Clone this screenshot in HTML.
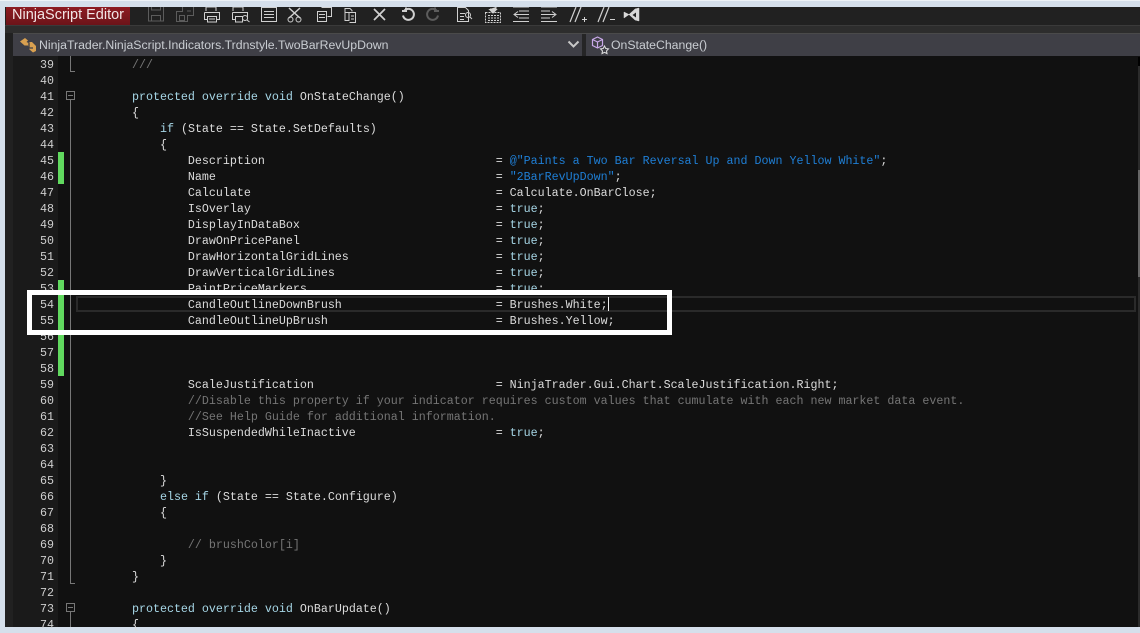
<!DOCTYPE html>
<html><head><meta charset="utf-8"><style>
html,body{margin:0;padding:0;width:1140px;height:627px;overflow:hidden;background:#d5dfeb}
div,svg,pre{position:absolute}
pre{margin:0;font:11.67px/16px "Liberation Mono",monospace;color:#dcdcdc;white-space:pre}
.k{color:#a6d6e6}.c{color:#757575}.s{color:#1f7fd6}
#n{left:14px;top:57px;width:40px;text-align:right;color:#cfcfcf}
</style></head><body>
<div style="left:0;top:0;width:1140px;height:1px;background:#eef2f7"></div>
<div style="left:5px;top:7px;width:1135px;height:620px;background:#212121"></div>
<div style="left:5px;top:25px;width:1135px;height:8px;background:#2d2d2d;border-top:1px solid #3a3a3a;box-sizing:border-box"></div>
<div style="left:13px;top:33px;width:1127px;height:1px;background:#4a4a4a"></div>
<div style="left:6px;top:7px;width:124px;height:18px;background:linear-gradient(#8e1b22,#6b1419)"></div>
<div style="left:12px;top:6px;font:14.5px/18px 'Liberation Sans',sans-serif;color:#f2e6e6;white-space:nowrap">NinjaScript Editor</div>

<svg style="left:140px;top:7px" width="510" height="18" fill="none" stroke="#d0d0d0" stroke-width="1">
<g stroke="#5c5c5c"><path d="M8.500-2h15v16h-15zM11.500-2v5h9v-5M11.500 13.500v-5h9v5"/><path d="M36.500 4.500h6v-6h11v10h-6v6h-11zM39.500 8.500h5v5h-5zM47 4h4"/></g>
<path d="M66 0h10v4M66 4v-4M64.500 5.500h15v7h-3M64.500 5.500v7h3M67.500 9.500h9v5.500h-9zM69 12h6"/>
<path d="M93 0h10v4M93 4v-4M92.500 5.500h15v7M92.500 5.500v7h3M95.500 9.500h7v5.500h-7z"/><circle cx="105" cy="11" r="2.500"/><path d="M107 13l2.500 2"/>
<path d="M121.500 0.500h15v14h-15zM124 4.500h10M124 7.500h10M124 10.500h10"/>
<path d="M149 1l11 10M160 1l-11 10" stroke-width="1.500"/><circle cx="150.500" cy="12.500" r="2.500"/><circle cx="158.500" cy="12.500" r="2.500"/>
<path d="M181.500 0.500h10v9h-4M177.500 4.500h9v10h-9zM179 7.500h6M179 10.500h6"/>
<path d="M205 5.500v-4h5l2 2v1M209.500 5.500h6v10h-6M205 5.500h4v8h-4z M211 9h3M211 12h3"/>
<path d="M234 2l11 11M245 2l-11 11" stroke-width="1.700"/>
<path d="M263.500 3.500a5.500 5.500 0 1 1-1.500 5M261 4h4v-3.500" stroke-width="2" transform="translate(1,0)"/>
<path d="M297.500 3.500a5.500 5.500 0 1 0 1.500 5M300 4h-4v-3.500" stroke-width="2" stroke="#5c5c5c" transform="translate(-1,0)"/>
<path d="M317.500 0.500h8l3 3v11h-11zM320 6.500h5M320 9.500h4M320 12.500h4"/><circle cx="328" cy="8" r="2.500"/><path d="M330 10l2 2"/>
<path d="M345.500 5.500h15v10h-15zM348 8.500h11M348 11h11M348 13.500h11" stroke-dasharray="2 1"/><path d="M350 2h6v-2M353 6l-3.500-3.500h7z" fill="#d0d0d0"/>
<path d="M373 0h16M379 4h10M379 7.500h10M379 11h10M373 14.500h16M378 4.500l-4 3 4 3M374 7.500h6"/>
<path d="M401 0h16M401 4h9M401 7.500h9M401 11h9M401 14.500h16M412 4.500l4 3-4 3M409 7.500h6"/>
<path d="M430 15l6-15M435 15l6-15" stroke-width="1.200"/><path d="M442 12.500h5M444.500 10v5"/>
<path d="M458 15l6-15M463 15l6-15" stroke-width="1.200"/><path d="M470 12.500h5"/>
<path d="M484 5l5 2.500 6-5.500 4-1v13l-4-1-6-5.500-5 3.500z M496 4v8l-5-4z" fill="#d8d8d8" stroke="#d8d8d8" stroke-width=".5"/><path d="M496 5.500v5l-3.500-2.500z" fill="#212121" stroke="none"/>
</svg>

<div style="left:13px;top:34px;width:1127px;height:22px;background:#3f3f46"></div>
<div style="left:582px;top:34px;width:4px;height:22px;background:#252526"></div>
<svg style="left:19px;top:36px" width="19" height="18"><path d="M1 5.500l5-3.500 3 2.500-1.500 1.500 2 1 2-1 1.500 0 4 4v5l-3 1.500-3.500-3-1.500-4-3.500 0z" fill="#d9a050"/><path d="M10 7v5h4" stroke="#3f3f46" fill="none" stroke-width="1.300"/></svg>
<div style="left:39px;top:37px;font:12.28px/17px 'Liberation Sans',sans-serif;color:#c9cdd2;white-space:nowrap">NinjaTrader.NinjaScript.Indicators.Trdnstyle.TwoBarRevUpDown</div>
<svg style="left:567px;top:39px" width="14" height="12" fill="none"><path d="M1.500 2.500l5 5 5-5" stroke="#c8c8c8" stroke-width="2"/></svg>
<svg style="left:591px;top:36px" width="20" height="19" fill="none"><path d="M6.500 1l5 2.500v6l-5 2.500-5-2.500v-6zM1.500 3.500l5 2.500 5-2.500M6.500 6v6" stroke="#c9a8e8" stroke-width="1.200"/><path d="M13.500 10l1.300 2.500 2.700.4-2 2 .5 2.700-2.500-1.300-2.500 1.300.5-2.700-2-2 2.700-.4z" stroke="#e0e0e0"/></svg>
<div style="left:611px;top:37px;font:12.28px/17px 'Liberation Sans',sans-serif;color:#c9cdd2;white-space:nowrap">OnStateChange()</div>

<div style="left:13px;top:56px;width:1127px;height:571px;background:#111"></div>
<div style="left:13px;top:56px;width:45px;height:571px;background:#1a1a1a"></div>
<div style="left:58px;top:152px;width:6px;height:32px;background:#61d95f"></div>
<div style="left:58px;top:280px;width:6px;height:96px;background:#61d95f"></div>

<div style="left:70px;top:56px;width:1px;height:16px;background:#777"></div>
<div style="left:70px;top:71px;width:5px;height:1px;background:#777"></div>
<div style="left:66px;top:91px;width:9px;height:9px;border:1px solid #777;box-sizing:border-box"></div>
<div style="left:68px;top:95px;width:5px;height:1px;background:#777"></div>
<div style="left:70px;top:100px;width:1px;height:483px;background:#777"></div>
<div style="left:70px;top:583px;width:5px;height:1px;background:#777"></div>
<div style="left:66px;top:603px;width:9px;height:9px;border:1px solid #777;box-sizing:border-box"></div>
<div style="left:68px;top:607px;width:5px;height:1px;background:#777"></div>
<div style="left:70px;top:612px;width:1px;height:15px;background:#777"></div>

<div style="left:76px;top:296px;width:1060px;height:16px;border:2px solid #2a2a2a;box-sizing:border-box"></div>
<div style="left:608px;top:297px;width:1px;height:14px;background:#eee"></div>

<pre id="n">39
40
41
42
43
44
45
46
47
48
49
50
51
52
53
54
55
56
57
58
59
60
61
62
63
64
65
66
67
68
69
70
71
72
73
74</pre>
<pre style="left:76px;top:57px">        <span class="c">///</span>

        <span class="k">protected override void</span> OnStateChange()
        {
            <span class="k">if</span> (State == State.SetDefaults)
            {
                Description                                 = <span class="s">@"Paints a Two Bar Reversal Up and Down Yellow White"</span>;
                Name                                        = <span class="s">"2BarRevUpDown"</span>;
                Calculate                                   = Calculate.OnBarClose;
                IsOverlay                                   = <span class="k">true</span>;
                DisplayInDataBox                            = <span class="k">true</span>;
                DrawOnPricePanel                            = <span class="k">true</span>;
                DrawHorizontalGridLines                     = <span class="k">true</span>;
                DrawVerticalGridLines                       = <span class="k">true</span>;
                PaintPriceMarkers                           = <span class="k">true</span>;
                CandleOutlineDownBrush                      = Brushes.White;
                CandleOutlineUpBrush                        = Brushes.Yellow;



                ScaleJustification                          = NinjaTrader.Gui.Chart.ScaleJustification.Right;
                <span class="c">//Disable this property if your indicator requires custom values that cumulate with each new market data event.</span>
                <span class="c">//See Help Guide for additional information.</span>
                IsSuspendedWhileInactive                    = <span class="k">true</span>;


            }
            <span class="k">else if</span> (State == State.Configure)
            {

                <span class="c">// brushColor[i]</span>
            }
        }

        <span class="k">protected override void</span> OnBarUpdate()
        {</pre>

<div style="left:1138px;top:57px;width:2px;height:9px;background:#000"></div>
<div style="left:1138px;top:66px;width:2px;height:561px;background:#2b2b2b"></div>
<div style="left:1138px;top:170px;width:2px;height:107px;background:#666"></div>

<div style="left:27px;top:290px;width:645px;height:45px;border:5px solid #fff;box-sizing:border-box"></div>
</body></html>
